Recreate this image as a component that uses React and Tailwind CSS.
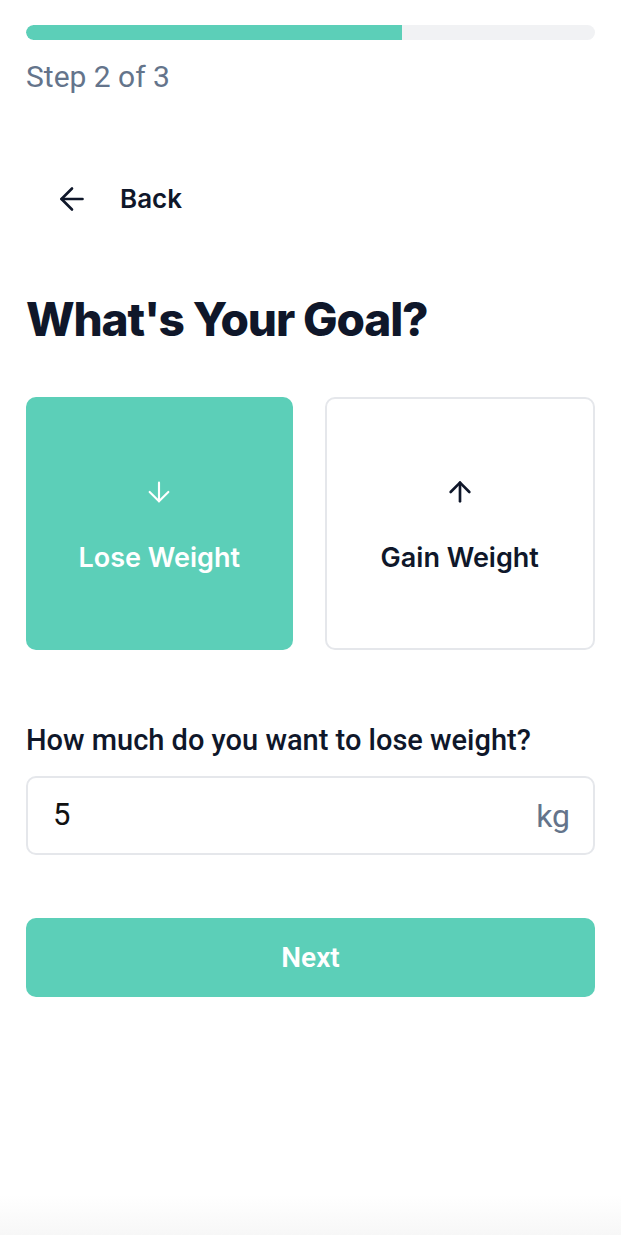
import { useState } from 'react';
import { ArrowLeft, ArrowDown, ArrowUp } from 'lucide-react';

const GoalCard = ({ label, icon: Icon, active, onClick }) => (
  <button
    onClick={onClick}
    className={
      active
        ? 'flex-1 h-[253px] rounded-[10px] bg-[#5ccfb8] text-white flex flex-col items-center justify-center'
        : 'flex-1 h-[253px] rounded-[10px] bg-white border-2 border-[#e5e7eb] text-[#0f172a] flex flex-col items-center justify-center'
    }
  >
    <Icon size={32} strokeWidth={active ? 1.6 : 2} />
    <span className="mt-[36px] text-[27px] font-semibold leading-none">{label}</span>
  </button>
);

export default function App() {
  const [goal, setGoal] = useState('lose');
  const [amount, setAmount] = useState('5');

  return (
    <div className="min-h-[1235px] bg-white flex flex-col font-['Inter',sans-serif] text-[#0f172a] relative">
      <div className="px-[26px] pt-[25px]">
        {/* progress */}
        <div className="h-[15px] w-full rounded-full bg-[#f1f2f4] overflow-hidden">
          <div className="h-full w-[66%] bg-[#5ccfb8] rounded-l-full" />
        </div>
        <p className="mt-[22px] text-[30px] text-[#64748b] font-['Roboto',sans-serif] leading-none">Step 2 of 3</p>

        <button className="mt-[87px] ml-[28px] flex items-center gap-[30px] text-[26px] font-semibold">
          <ArrowLeft size={36} strokeWidth={1.75} />
          <span>Back</span>
        </button>

        <h1 className="mt-[78px] text-[46px] font-extrabold tracking-tight leading-none">What's Your Goal?</h1>

        <div className="mt-[55px] flex gap-[32px]">
          <GoalCard label="Lose Weight" icon={ArrowDown} active={goal === 'lose'} onClick={() => setGoal('lose')} />
          <GoalCard label="Gain Weight" icon={ArrowUp} active={goal === 'gain'} onClick={() => setGoal('gain')} />
        </div>

        <p className="mt-[76px] text-[29px] font-medium font-['Roboto',sans-serif] leading-none">
          How much do you want to {goal === 'lose' ? 'lose' : 'gain'} weight?
        </p>

        <div className="mt-[21px] h-[79px] rounded-[10px] border-2 border-[#e5e7eb] flex items-center pl-[25px] pr-[23px] font-['Roboto',sans-serif]">
          <input
            value={amount}
            onChange={(e) => setAmount(e.target.value)}
            className="flex-1 min-w-0 text-[31px] outline-none bg-transparent text-[#111]"
          />
          <span className="text-[32px] text-[#64748b]">kg</span>
        </div>

        <button className="mt-[63px] w-full h-[79px] rounded-[10px] bg-[#5ccfb8] text-white text-[28px] font-semibold font-['Roboto',sans-serif]">
          Next
        </button>
      </div>
      <div className="absolute bottom-0 left-0 right-0 h-[40px] bg-gradient-to-b from-white to-[#f7f7f7]" />
    </div>
  );
}
